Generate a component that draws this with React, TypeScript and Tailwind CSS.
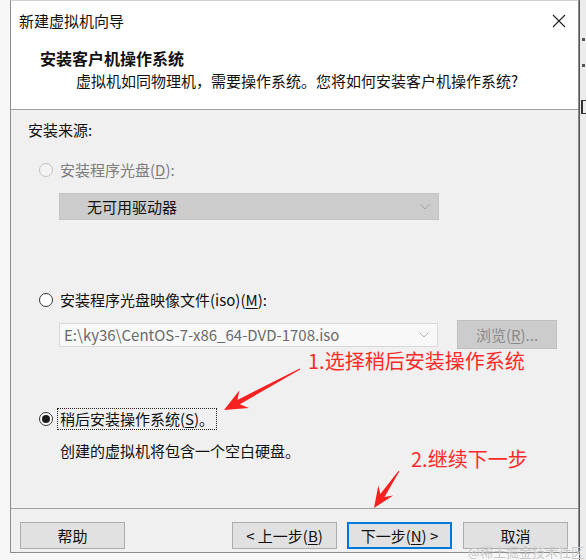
import React from "react";

function arrowPoints(x1: number, y1: number, x2: number, y2: number, headLen = 20, headW = 9, shaftW = 5, tailW = 1): string {
  const dx = x2 - x1;
  const dy = y2 - y1;
  const len = Math.sqrt(dx * dx + dy * dy);
  const ux = dx / len;
  const uy = dy / len;
  const nx = -uy;
  const ny = ux;
  const neckX = x2 - ux * headLen * 0.72;
  const neckY = y2 - uy * headLen * 0.72;
  const barbX = x2 - ux * headLen;
  const barbY = y2 - uy * headLen;
  const pts: [number, number][] = [
    [x1 + (nx * tailW) / 2, y1 + (ny * tailW) / 2],
    [neckX + (nx * shaftW) / 2, neckY + (ny * shaftW) / 2],
    [barbX + nx * headW, barbY + ny * headW],
    [x2, y2],
    [barbX - nx * headW, barbY - ny * headW],
    [neckX - (nx * shaftW) / 2, neckY - (ny * shaftW) / 2],
    [x1 - (nx * tailW) / 2, y1 - (ny * tailW) / 2],
  ];
  return pts.map((p) => `${p[0].toFixed(1)},${p[1].toFixed(1)}`).join(" ");
}

function Chevron({ color }: { color: string }) {
  return (
    <svg width="10" height="6" viewBox="0 0 10 6">
      <path d="M0.5 0.5 L5 5 L9.5 0.5" fill="none" stroke={color} strokeWidth="1" />
    </svg>
  );
}

function Radio({ state }: { state: "disabled" | "off" | "on" }) {
  if (state === "disabled") {
    return <div className="w-[14px] h-[14px] rounded-full border border-[#c2c2c2] bg-[#f4f4f4] shrink-0" />;
  }
  return (
    <div className="w-[14px] h-[14px] rounded-full border border-[#333333] bg-white shrink-0 flex items-center justify-center">
      {state === "on" && <div className="w-[8px] h-[8px] rounded-full bg-[#1a1a1a]" />}
    </div>
  );
}

export default function App() {
  return (
    <div className="w-[586px] h-[560px] relative overflow-hidden bg-[#f7f7f7] flex items-start pl-[10px] font-['Noto_Sans_CJK_SC','Noto_Sans',sans-serif] text-[15px] text-[#111]">
      {/* Dialog */}
      <div className="w-[569px] h-[553px] border border-[#8c8c8c] border-t-[#d0d0d0] flex flex-col bg-[#f0f0f0] shrink-0">
        {/* Header */}
        <div className="h-[109px] bg-white border-b border-[#a0a0a0] flex flex-col">
          <div className="h-[40px] flex items-center justify-between pl-[8px] pr-[12px]">
            <span className="leading-[20px]">新建虚拟机向导</span>
            <svg width="14" height="14" viewBox="0 0 14 14">
              <path d="M1 1 L13 13 M13 1 L1 13" stroke="#222" strokeWidth="1.1" />
            </svg>
          </div>
          <div className="mt-[7px] pl-[29px] leading-[20px] font-bold text-[16px]">安装客户机操作系统</div>
          <div className="mt-[3px] pl-[65px] leading-[20px]">虚拟机如同物理机，需要操作系统。您将如何安装客户机操作系统?</div>
        </div>

        {/* Body */}
        <div className="flex-1 flex flex-col">
          <div className="mt-[10px] pl-[17px] leading-[20px]">安装来源:</div>

          <div className="mt-[20px] pl-[28px] flex items-center gap-[7px] h-[20px]">
            <Radio state="disabled" />
            <span className="text-[#7d7d7d] leading-[20px]">
              安装程序光盘(<span className="underline underline-offset-2">D</span>):
            </span>
          </div>

          <div className="mt-[13px] ml-[48px] w-[380px] h-[27px] bg-[#cccccc] border border-[#c4c4c4] flex items-center justify-between pl-[27px] pr-[8px]">
            <span className="leading-[20px]">无可用驱动器</span>
            <Chevron color="#a0a0a0" />
          </div>

          <div className="mt-[70px] pl-[28px] flex items-center gap-[7px] h-[20px]">
            <Radio state="off" />
            <span className="leading-[20px]">
              安装程序光盘映像文件(iso)(<span className="underline underline-offset-2">M</span>):
            </span>
          </div>

          <div className="mt-[10px] ml-[48px] flex items-center gap-[19px] h-[29px]">
            <div className="w-[379px] h-[24px] bg-[#f8f8f8] border border-[#d9d9d9] flex items-center justify-between pl-[4px] pr-[8px]">
              <span className="leading-[20px] text-[#6a6a6a]">E:\ky36\CentOS-7-x86_64-DVD-1708.iso</span>
              <Chevron color="#b0b0b0" />
            </div>
            <div className="w-[100px] h-[29px] bg-[#cccccc] border border-[#c0c0c0] flex items-center justify-center text-[#8a8a8a] leading-[20px]">
              浏览(<span className="underline underline-offset-2">R</span>)...
            </div>
          </div>

          <div className="mt-[59px] pl-[28px] flex items-center gap-[4px] h-[22px]">
            <Radio state="on" />
            <span className="leading-[20px] border border-dotted border-[#222] px-[2px]">
              稍后安装操作系统(<span className="underline underline-offset-2">S</span>)。
            </span>
          </div>

          <div className="mt-[11px] pl-[49px] leading-[20px]">创建的虚拟机将包含一个空白硬盘。</div>
        </div>

        {/* Footer */}
        <div className="border-t border-[#a0a0a0] h-[44px] flex items-start pt-[13px] pl-[9px] pr-[10px]">
          <div className="w-[105px] h-[27px] bg-[#e1e1e1] border border-[#adadad] flex items-center justify-center leading-[16px]">帮助</div>
          <div className="flex-1" />
          <div className="w-[105px] h-[27px] bg-[#e1e1e1] border border-[#adadad] flex items-center justify-center leading-[16px]">
            &lt; 上一步(<span className="underline underline-offset-2">B</span>)
          </div>
          <div className="ml-[10px] w-[105px] h-[27px] bg-[#e1e1e1] border-2 border-[#0078d7] flex items-center justify-center leading-[16px]">
            下一步(<span className="underline underline-offset-2">N</span>) &gt;
          </div>
          <div className="ml-[11px] w-[105px] h-[27px] bg-[#e1e1e1] border border-[#adadad] flex items-center justify-center leading-[16px]">取消</div>
        </div>
      </div>

      {/* Right edge: neighbouring window fragment */}
      <div className="flex-1 h-[560px] bg-[#ececec] border-l border-[#555] relative">
        <div className="absolute left-[2px] top-[38px] w-[3px] h-[3px] bg-[#555]" />
        <div className="absolute left-[2px] top-[64px] w-[3px] h-[3px] bg-[#555]" />
        <div className="absolute left-[1px] top-[100px] w-[5px] h-[14px] border-l-2 border-y border-[#333]" />
      </div>

      {/* Annotations */}
      <div className="absolute left-[308px] top-[347px] text-[20px] leading-[28px] text-[#fa2a2a]">1.选择稍后安装操作系统</div>
      <div className="absolute left-[411px] top-[445px] text-[20px] leading-[28px] text-[#fa2a2a]">2.继续下一步</div>
      <svg className="absolute left-0 top-0 pointer-events-none" width="586" height="560" viewBox="0 0 586 560">
        <polygon points={arrowPoints(300, 369, 224, 410, 23, 10, 5, 1)} fill="#f52020" />
        <polygon points={arrowPoints(399, 471, 374, 508, 21, 9, 5, 1)} fill="#f52020" />
      </svg>

      {/* Watermark */}
      <div className="absolute right-[2px] top-[545px] text-[13px] leading-[14px] text-[#c9c9c9]">@稀土掘金技术社区</div>
    </div>
  );
}
